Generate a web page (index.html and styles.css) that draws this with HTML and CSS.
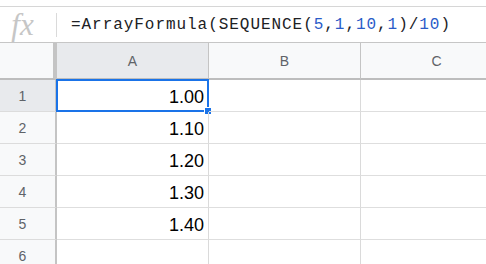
FILE: index.html
```html
<!DOCTYPE html>
<html>
<head>
<meta charset="utf-8">
<link rel="stylesheet" href="styles.css">
</head>
<body>
<div class="top-gap"></div>
<div class="formula-bar">
  <div class="fx">fx</div>
  <div class="sep"></div>
  <div class="formula">=ArrayFormula(SEQUENCE(<span class="num">5</span>,<span class="num">1</span>,<span class="num">10</span>,<span class="num">1</span>)/<span class="num">10</span>)</div>
</div>
<div class="sheet">
<div class="grid">
  <div class="corner"></div>
  <div class="col-head selected-head">A</div>
  <div class="col-head">B</div>
  <div class="col-head">C</div>

  <div class="row-head selected-head">1</div>
  <div class="cell value active">1.00<span class="sel"><span class="handle"></span></span></div>
  <div class="cell"></div>
  <div class="cell"></div>

  <div class="row-head">2</div>
  <div class="cell value">1.10</div>
  <div class="cell"></div>
  <div class="cell"></div>

  <div class="row-head">3</div>
  <div class="cell value">1.20</div>
  <div class="cell"></div>
  <div class="cell"></div>

  <div class="row-head">4</div>
  <div class="cell value">1.30</div>
  <div class="cell"></div>
  <div class="cell"></div>

  <div class="row-head">5</div>
  <div class="cell value">1.40</div>
  <div class="cell"></div>
  <div class="cell"></div>

  <div class="row-head">6</div>
  <div class="cell"></div>
  <div class="cell"></div>
  <div class="cell"></div>
</div>
</div>
</body>
</html>
```
FILE: styles.css
```css
html, body {
  margin: 0;
  padding: 0;
  background: #ffffff;
  overflow: hidden;
}
body {
  width: 486px;
  height: 264px;
  font-family: "Liberation Sans", Arial, sans-serif;
}
.top-gap {
  height: 6px;
}
.formula-bar {
  display: flex;
  align-items: center;
  height: 35px;
  border-top: 1px solid #d6d6d6;
  border-bottom: 1px solid #c6c6c6;
  background: #ffffff;
}
.fx {
  width: 45px;
  text-align: center;
  font-family: "Liberation Serif", "Times New Roman", serif;
  font-style: italic;
  font-size: 31px;
  color: #c6c6c6;
  line-height: 1;
  margin-top: -1px;
}
.sep {
  width: 1px;
  height: 24px;
  background: #dadada;
  margin-left: 11px;
  margin-right: 14px;
}
.formula {
  font-family: "Liberation Mono", "Courier New", monospace;
  font-size: 16px;
  letter-spacing: 0.95px;
  color: #202124;
  white-space: nowrap;
  margin-top: 1px;
}
.num {
  color: #2a5bc8;
}
.sheet {
  width: 486px;
  overflow: hidden;
}
.grid {
  display: grid;
  width: 513px;
  grid-template-columns: 57px 152px 152px 152px;
  grid-template-rows: 37px repeat(6, 32px);
}
.corner {
  background: #f8f9fa;
  border-right: 4px solid #c4c4c4;
  border-bottom: 2px solid #bdbdbd;
}
.col-head {
  display: flex;
  align-items: center;
  justify-content: center;
  background: #f8f9fa;
  border-right: 1px solid #c4c4c4;
  border-bottom: 2px solid #bdbdbd;
  font-size: 14px;
  color: #5f6368;
}
.row-head {
  display: flex;
  align-items: center;
  justify-content: center;
  padding-right: 10px;
  background: #f8f9fa;
  border-right: 2px solid #c4c4c4;
  border-bottom: 1px solid #dcdcdc;
  font-size: 14px;
  color: #5f6368;
}
.selected-head {
  background: #e8eaed;
}
.cell {
  position: relative;
  border-right: 1px solid #dadada;
  border-bottom: 1px solid #dedede;
}
.value {
  display: flex;
  align-items: flex-end;
  justify-content: flex-end;
  padding: 0 4px 3px 0;
  font-size: 18px;
  color: #000000;
}
.sel {
  position: absolute;
  left: -1px;
  top: -1px;
  right: -1px;
  bottom: -1px;
  border: 2px solid #1a73e8;
}
.handle {
  position: absolute;
  right: -5px;
  bottom: -5px;
  width: 6px;
  height: 6px;
  background: #1a73e8;
  border: 1px solid #ffffff;
}
```
